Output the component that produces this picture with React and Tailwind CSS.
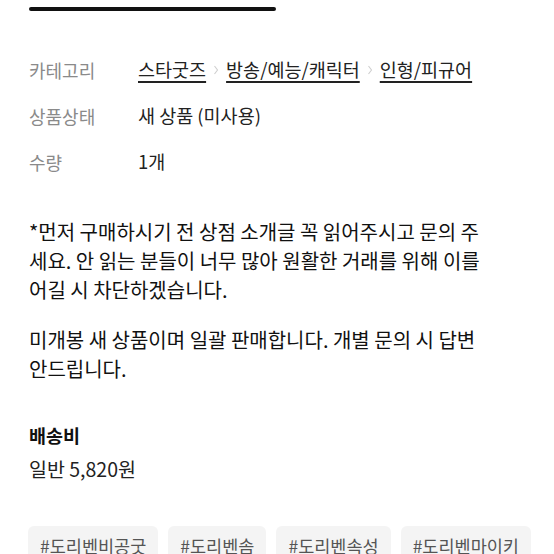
import React from "react";

const font = { fontFamily: '"Noto Sans CJK KR", "Noto Sans", sans-serif' };

function Chevron() {
  return (
    <svg width="10" height="16" viewBox="0 0 10 16" className="mx-[5px] shrink-0">
      <path d="M3.5 4 L6.5 8 L3.5 12" fill="none" stroke="#cfcfcf" strokeWidth="1.1" />
    </svg>
  );
}

function Row({ label, children }) {
  return (
    <div className="flex h-[46px] items-center">
      <div className="w-[109px] shrink-0 text-[18px] text-[#8a8a8a]">{label}</div>
      <div className="flex items-center text-[18.5px] text-[#222]">{children}</div>
    </div>
  );
}

const U = ({ children }) => (
  <span className="underline decoration-[1.5px] underline-offset-[4px]">{children}</span>
);

export default function App() {
  const tags = ["#도리벤비공굿", "#도리벤솜", "#도리벤속성", "#도리벤마이키"];
  return (
    <div className="h-[554px] w-[554px] overflow-hidden bg-white px-[29px]" style={font}>
      <div className="mt-[7px] h-[4px] w-[247px] rounded-full bg-[#111]" />
      <div className="mt-[36px] whitespace-nowrap">
        <Row label="카테고리">
          <U>스타굿즈</U>
          <Chevron />
          <U>방송/예능/캐릭터</U>
          <Chevron />
          <U>인형/피규어</U>
        </Row>
        <Row label="상품상태">새 상품 (미사용)</Row>
        <Row label="수량">1개</Row>
      </div>
      <div className="mt-[32px] text-[20px] leading-[29px] text-[#111] whitespace-nowrap">
        <p>
          *먼저 구매하시기 전 상점 소개글 꼭 읽어주시고 문의 주<br />
          세요. 안 읽는 분들이 너무 많아 원활한 거래를 위해 이를<br />
          어길 시 차단하겠습니다.
        </p>
        <p className="mt-[21px]">
          미개봉 새 상품이며 일괄 판매합니다. 개별 문의 시 답변<br />
          안드립니다.
        </p>
      </div>
      <div className="mt-[40px] text-[18.5px] font-bold leading-[24px] text-[#111]">배송비</div>
      <div className="mt-[9px] text-[19.5px] leading-[26px] text-[#222]">일반 5,820원</div>
      <div className="-ml-[1px] mt-[44px] flex gap-[10px] whitespace-nowrap">
        {tags.map((t) => (
          <div
            key={t}
            className="flex h-[36px] shrink-0 items-center rounded-[6px] bg-[#f4f4f4] px-[12px] pt-[4px] text-[17.5px] text-[#555]"
          >
            {t}
          </div>
        ))}
      </div>
    </div>
  );
}
